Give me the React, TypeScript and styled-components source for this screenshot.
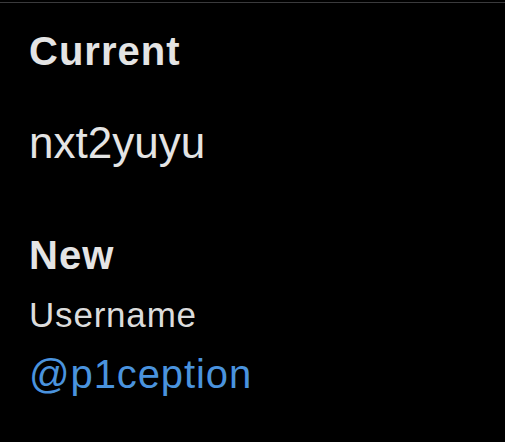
import React from "react";
import styled, { createGlobalStyle } from "styled-components";

const GlobalStyle = createGlobalStyle`
  html, body {
    margin: 0;
    padding: 0;
    background: #000;
  }
  body {
    font-family: "Liberation Sans", Arial, sans-serif;
    -webkit-font-smoothing: antialiased;
  }
`;

const Screen = styled.div`
  min-height: 442px;
  background: #000;
  padding-top: 2px;
  box-sizing: border-box;
`;

const Panel = styled.section`
  border-top: 1px solid #3a3a3c;
  padding: 24px 29px 0;
  display: flex;
  flex-direction: column;
`;

const Heading = styled.h2<{ $gap?: number }>`
  margin: ${(p) => p.$gap ?? 0}px 0 0;
  font-size: 40px;
  line-height: 48px;
  font-weight: 700;
  letter-spacing: 1px;
  color: #e4e4e4;
`;

const Value = styled.div`
  margin-top: 42px;
  font-size: 44px;
  line-height: 52px;
  color: #e4e4e4;
`;

const Label = styled.div`
  margin-top: 16px;
  font-size: 35px;
  line-height: 40px;
  letter-spacing: 0.8px;
  color: #dcdcdc;
`;

const Handle = styled.a`
  margin-top: 15px;
  font-size: 40px;
  line-height: 48px;
  letter-spacing: 0.9px;
  color: #4a93de;
  text-decoration: none;
`;

export default function App() {
  return (
    <Screen>
      <GlobalStyle />
      <Panel>
        <Heading>Current</Heading>
        <Value>nxt2yuyu</Value>
        <Heading $gap={62}>New</Heading>
        <Label>Username</Label>
        <Handle>@p1ception</Handle>
      </Panel>
    </Screen>
  );
}
